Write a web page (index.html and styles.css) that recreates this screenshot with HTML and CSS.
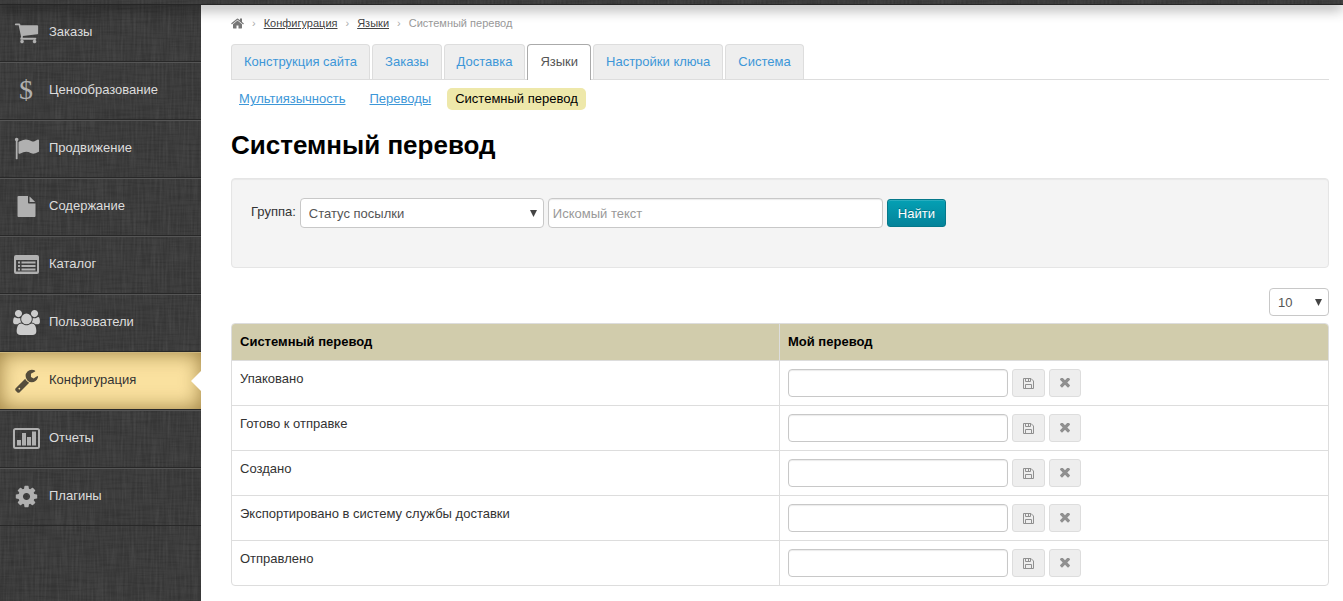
FILE: index.html
```html
<!DOCTYPE html>
<html lang="ru">
<head>
  <meta charset="UTF-8" />
  <meta name="viewport" content="width=device-width, initial-scale=1.0"/>
  <title>Системный перевод</title>
  <link rel="stylesheet" href="styles.css">
</head>
<body>
  <!-- общие иконки кнопок -->
  <svg class="sprite" aria-hidden="true">
    <symbol id="i-save" viewBox="0 0 11 11">
      <path d="M.5.5h7.500l2.500 2.500v7.500h-10zM2.500.5v3h5v-3M2.500 10.500v-4h6v4" fill="none" stroke="currentColor"/>
      <path d="M5 1h1v2h-1z" fill="currentColor"/>
    </symbol>
    <symbol id="i-times" viewBox="300 430 1192 1192">
      <path d="M1490 1322q0 40-28 68l-136 136q-28 28-68 28t-68-28l-294-294-294 294q-28 28-68 28t-68-28l-136-136q-28-28-28-68t28-68l294-294-294-294q-28-28-28-68t28-68l136-136q28-28 68-28t68 28l294 294 294-294q28-28 68-28t68 28l136 136q28 28 28 68t-28 68l-294 294 294 294q28 28 28 68z"/>
    </symbol>
  </svg>

  <header class="topbar"></header>

  <div class="layout">
    <nav class="sidebar">
      <a href="#" class="menu-item">
        <span class="menu-icon"><svg width="25" height="25" viewBox="0 0 1792 1792"><path d="M704 1536q0 52-38 90t-90 38-90-38-38-90 38-90 90-38 90 38 38 90zm896 0q0 52-38 90t-90 38-90-38-38-90 38-90 90-38 90 38 38 90zm128-1088v512q0 24-16.500 42.500t-40.500 21.500l-1044 122q13 60 13 70 0 16-24 64h920q26 0 45 19t19 45-19 45-45 19h-1024q-26 0-45-19t-19-45q0-11 8-31.500t16-36 21.500-40 15.500-29.500l-177-823h-204q-26 0-45-19t-19-45 19-45 45-19h256q16 0 28.500 6.500t19.500 15.500 13 24.500 8 26 5.500 29.500 4.500 26h1201q26 0 45 19t19 45z"/></svg></span>
        <span class="menu-text">Заказы</span>
      </a>
      <a href="#" class="menu-item">
        <span class="menu-icon menu-dollar">$</span>
        <span class="menu-text">Ценообразование</span>
      </a>
      <a href="#" class="menu-item">
        <span class="menu-icon"><svg width="25" height="25" viewBox="0 0 1792 1792"><path d="M320 256q0 72-64 110v1266q0 13-9.500 22.500t-22.500 9.500h-64q-13 0-22.500-9.500t-9.500-22.500v-1266q-64-38-64-110 0-53 37.500-90.500t90.500-37.500 90.500 37.500 37.500 90.500zm1472 64v763q0 25-12.500 38.500t-39.500 27.500q-215 116-369 116-61 0-123.500-22t-108.500-48-115.500-48-142.500-22q-192 0-464 146-17 9-33 9-26 0-45-19t-19-45v-742q0-32 31-55 21-14 79-43 236-120 421-120 107 0 200 29t219 88q38 19 88 19 54 0 117.500-21t110-47 88-47 54.500-21q26 0 45 19t19 45z"/></svg></span>
        <span class="menu-text">Продвижение</span>
      </a>
      <a href="#" class="menu-item">
        <span class="menu-icon"><svg width="21" height="21" viewBox="0 0 1792 1792"><path d="M1152 512v-472q22 14 36 28l408 408q14 14 28 36h-472zm-128 32q0 40 28 68t68 28h544v1056q0 40-28 68t-68 28h-1344q-40 0-68-28t-28-68v-1600q0-40 28-68t68-28h800v544z"/></svg></span>
        <span class="menu-text">Содержание</span>
      </a>
      <a href="#" class="menu-item">
        <span class="menu-icon"><svg width="25" height="19" viewBox="0 0 25 19"><path fill-rule="evenodd" d="M2 0h21a2 2 0 0 1 2 2v15a2 2 0 0 1-2 2h-21a2 2 0 0 1-2-2v-15a2 2 0 0 1 2-2zM2 5v11.500h21v-11.500z"/><path d="M4 6.500h2v2h-2zM4 10h2v2h-2zM4 13.500h2v2h-2zM7.500 6.500h14v2h-14zM7.500 10h14v2h-14zM7.500 13.500h14v2h-14z"/></svg></span>
        <span class="menu-text">Каталог</span>
      </a>
      <a href="#" class="menu-item menu-item-bright">
        <span class="menu-icon"><svg width="27" height="25" viewBox="0 0 1920 1792"><path d="M593 896q-162 5-265 128h-134q-82 0-138-40.500t-56-118.500q0-353 124-353 6 0 43.500 21t97.500 42.500 119 21.500q67 0 133-23-5 37-5 66 0 143 83 263zm1071 637q0 120-73 189.500t-194 69.500h-874q-121 0-194-69.500t-73-189.500q0-53 3.500-103.500t14-109 26.500-108.500 43-97.500 62-81 85.500-53.500 111.500-20q10 0 43 21.500t73 48 107 48 135 21.500 135-21.500 107-48 73-48 43-21.500q61 0 111.500 20t85.500 53.500 62 81 43 97.500 26.500 108.500 14 109 3.500 103.500zm-1024-1277q0 106-75 181t-181 75-181-75-75-181 75-181 181-75 181 75 75 181zm704 384q0 159-112.500 271.500t-271.500 112.500-271.500-112.500-112.500-271.500 112.500-271.500 271.500-112.500 271.500 112.500 112.500 271.500zm576 225q0 78-56 118.500t-138 40.500h-134q-103-123-265-128 83-120 83-263 0-29-5-66 66 23 133 23 59 0 119-21.500t97.500-42.500 43.500-21q124 0 124 353zm-128-609q0 106-75 181t-181 75-181-75-75-181 75-181 181-75 181 75 75 181z"/></svg></span>
        <span class="menu-text">Пользователи</span>
      </a>
      <a href="#" class="menu-item active">
        <span class="menu-icon"><svg width="25" height="25" viewBox="0 0 1792 1792"><path d="M448 1472q0-26-19-45t-45-19-45 19-19 45 19 45 45 19 45-19 19-45zm644-420l-682 682q-37 37-90 37-52 0-91-37l-106-108q-38-36-38-90 0-53 38-91l681-681q39 98 114.500 173.500t173.500 114.500zm634-435q0 39-23 106-47 134-164.500 217.500t-258.500 83.500q-185 0-316.500-131.500t-131.500-316.500 131.500-316.500 316.500-131.500q58 0 121.500 16.500t107.500 46.500q16 11 16 28t-16 28l-293 169v224l193 107q5-3 79-48.500t135.500-81 70.500-35.500q15 0 23.500 10t8.500 25z"/></svg></span>
        <span class="menu-text">Конфигурация</span>
      </a>
      <a href="#" class="menu-item">
        <span class="menu-icon"><svg width="27" height="21" viewBox="0 0 27 21"><rect x="1" y="1" width="25" height="19" rx="1.500" fill="none" stroke="currentColor" stroke-width="2"/><path d="M4 12h4v5.500h-4zM9 5h4v12.500h-4zM14 9h4v8.500h-4zM19 3.500h4v14h-4z"/></svg></span>
        <span class="menu-text">Отчеты</span>
      </a>
      <a href="#" class="menu-item">
        <span class="menu-icon"><svg width="25" height="25" viewBox="0 0 1792 1792"><path d="M1152 896q0-106-75-181t-181-75-181 75-75 181 75 181 181 75 181-75 75-181zm512-109v222q0 12-8 23t-20 13l-185 28q-19 54-39 91 35 50 107 138 10 12 10 25t-9 23q-27 37-99 108t-94 71q-12 0-26-9l-138-108q-44 23-91 38-16 136-29 186-7 28-36 28h-222q-14 0-24.500-8.500t-11.500-21.500l-28-184q-49-16-90-37l-141 107q-10 9-25 9-14 0-25-11-126-114-165-168-7-10-7-23 0-12 8-23 15-21 51-66.500t54-70.500q-27-50-41-99l-183-27q-13-2-21-12.500t-8-23.500v-222q0-12 8-23t19-13l186-28q14-46 39-92-40-57-107-138-10-12-10-24 0-10 9-23 26-36 98.500-107.500t94.500-71.500q13 0 26 10l138 107q44-23 91-38 16-136 29-186 7-28 36-28h222q14 0 24.500 8.500t11.500 21.500l28 184q49 16 90 37l142-107q9-9 24-9 13 0 25 10 129 119 165 170 7 8 7 22 0 12-8 23-15 21-51 66.500t-54 70.500q26 50 41 98l183 28q13 2 21 12.500t8 23.500z"/></svg></span>
        <span class="menu-text">Плагины</span>
      </a>
    </nav>

    <main class="content">
      <nav class="breadcrumbs">
        <a href="#" aria-label="Главная"><svg width="13" height="13" viewBox="64 64 1664 1664"><path d="M1472 992v480q0 26-19 45t-45 19h-384v-384h-256v384h-384q-26 0-45-19t-19-45v-480q0-1 .5-3t.5-3l575-474 575 474q1 2 1 6zm223-69l-62 74q-8 9-21 11h-3q-13 0-21-7l-692-577-692 577q-12 8-24 7-13-2-21-11l-62-74q-8-10-7-23.500t11-21.500l719-599q32-26 76-26t76 26l244 204v-195q0-14 9-23t23-9h192q14 0 23 9t9 23v408l219 182q10 8 11 21.500t-7 23.500z"/></svg></a>
        <span class="sep">›</span>
        <a href="#">Конфигурация</a>
        <span class="sep">›</span>
        <a href="#">Языки</a>
        <span class="sep">›</span>
        <span class="current">Системный перевод</span>
      </nav>

      <nav class="tabs">
        <a href="#" class="tab">Конструкция сайта</a>
        <a href="#" class="tab">Заказы</a>
        <a href="#" class="tab">Доставка</a>
        <a href="#" class="tab active">Языки</a>
        <a href="#" class="tab">Настройки ключа</a>
        <a href="#" class="tab">Система</a>
      </nav>

      <nav class="subnav">
        <a href="#">Мультиязычность</a>
        <a href="#">Переводы</a>
        <a href="#" class="active">Системный перевод</a>
      </nav>

      <h1>Системный перевод</h1>

      <form class="filter">
        <label for="group">Группа:</label>
        <select id="group" class="select group-select">
          <option>Статус посылки</option>
        </select>
        <input type="text" class="field search-field" placeholder="Искомый текст" aria-label="Искомый текст">
        <button type="button" class="btn-find">Найти</button>
      </form>

      <div class="pager">
        <select class="select page-size" aria-label="Строк на странице">
          <option>10</option>
        </select>
      </div>

      <table class="grid">
        <thead>
          <tr>
            <th>Системный перевод</th>
            <th>Мой перевод</th>
          </tr>
        </thead>
        <tbody>
          <tr>
            <td><label for="t1">Упаковано</label></td>
            <td>
              <div class="edit">
                <input type="text" id="t1" class="field">
                <button type="button" class="btn-icon" aria-label="Сохранить"><svg width="11" height="11"><use href="#i-save"/></svg></button>
                <button type="button" class="btn-icon" aria-label="Удалить"><svg width="10" height="10"><use href="#i-times"/></svg></button>
              </div>
            </td>
          </tr>
          <tr>
            <td><label for="t2">Готово к отправке</label></td>
            <td>
              <div class="edit">
                <input type="text" id="t2" class="field">
                <button type="button" class="btn-icon" aria-label="Сохранить"><svg width="11" height="11"><use href="#i-save"/></svg></button>
                <button type="button" class="btn-icon" aria-label="Удалить"><svg width="10" height="10"><use href="#i-times"/></svg></button>
              </div>
            </td>
          </tr>
          <tr>
            <td><label for="t3">Создано</label></td>
            <td>
              <div class="edit">
                <input type="text" id="t3" class="field">
                <button type="button" class="btn-icon" aria-label="Сохранить"><svg width="11" height="11"><use href="#i-save"/></svg></button>
                <button type="button" class="btn-icon" aria-label="Удалить"><svg width="10" height="10"><use href="#i-times"/></svg></button>
              </div>
            </td>
          </tr>
          <tr>
            <td><label for="t4">Экспортировано в систему службы доставки</label></td>
            <td>
              <div class="edit">
                <input type="text" id="t4" class="field">
                <button type="button" class="btn-icon" aria-label="Сохранить"><svg width="11" height="11"><use href="#i-save"/></svg></button>
                <button type="button" class="btn-icon" aria-label="Удалить"><svg width="10" height="10"><use href="#i-times"/></svg></button>
              </div>
            </td>
          </tr>
          <tr>
            <td><label for="t5">Отправлено</label></td>
            <td>
              <div class="edit">
                <input type="text" id="t5" class="field">
                <button type="button" class="btn-icon" aria-label="Сохранить"><svg width="11" height="11"><use href="#i-save"/></svg></button>
                <button type="button" class="btn-icon" aria-label="Удалить"><svg width="10" height="10"><use href="#i-times"/></svg></button>
              </div>
            </td>
          </tr>
        </tbody>
      </table>
    </main>
  </div>
</body>
</html>
```
FILE: styles.css
```css
* {
  margin: 0;
  padding: 0;
  box-sizing: border-box;
}

body {
  font-family: "Liberation Sans", Arial, sans-serif;
  font-size: 13px;
  line-height: 20px;
  color: #333;
  background: #fff;
  display: flex;
  flex-direction: column;
  min-height: 100vh;
}

svg {
  display: block;
  fill: currentColor;
}

.sprite {
  position: absolute;
  width: 0;
  height: 0;
}

input, select, button {
  font-family: inherit;
  font-size: 13px;
}

/* тканевая текстура: вертикальные и горизонтальные нити */
.topbar,
.sidebar {
  background-color: #3a3a3a;
  background-image:
    url("data:image/svg+xml,%3Csvg xmlns='http://www.w3.org/2000/svg' width='200' height='200'%3E%3Cfilter id='a' x='0' y='0' width='1' height='1'%3E%3CfeTurbulence type='fractalNoise' baseFrequency='.5 .03' numOctaves='2' stitchTiles='stitch'/%3E%3CfeColorMatrix values='0 0 0 0 1 0 0 0 0 1 0 0 0 0 1 .12 0 0 0 -.04'/%3E%3C/filter%3E%3Crect width='200' height='200' filter='url(%23a)'/%3E%3C/svg%3E"),
    url("data:image/svg+xml,%3Csvg xmlns='http://www.w3.org/2000/svg' width='200' height='200'%3E%3Cfilter id='a' x='0' y='0' width='1' height='1'%3E%3CfeTurbulence type='fractalNoise' baseFrequency='.03 .5' numOctaves='2' stitchTiles='stitch'/%3E%3CfeColorMatrix values='0 0 0 0 0 0 0 0 0 0 0 0 0 0 0 .3 0 0 0 -.12'/%3E%3C/filter%3E%3Crect width='200' height='200' filter='url(%23a)'/%3E%3C/svg%3E");
}

.topbar {
  position: relative;
  z-index: 2;
  height: 4px;
  box-shadow: 0 1px 0 #262626, 0 3px 14px rgba(0, 0, 0, 0.8);
}

.layout {
  flex: 1;
  display: flex;
}

/* боковое меню */
.sidebar {
  flex: 0 0 201px;
}

.menu-item {
  position: relative;
  display: flex;
  align-items: center;
  gap: 9px;
  height: 58px;
  padding: 0 0 2px 12px;
  border-top: 1px solid #555;
  border-bottom: 1px solid #282828;
  color: #ddd;
  text-decoration: none;
}

.menu-icon {
  width: 28px;
  display: flex;
  justify-content: center;
  color: #b0b0b0;
}

.menu-dollar {
  font-family: "Liberation Serif", serif;
  font-size: 28px;
}

.menu-item-bright .menu-icon {
  color: #ccc;
}

.menu-item.active {
  color: #333;
  background: #fae19f;
  border-top-color: #cdb67d;
  box-shadow: inset 0 0 20px rgba(90, 60, 0, 0.6);
}

.menu-item.active .menu-icon {
  color: #554d3c;
}

.menu-item.active::after {
  content: "";
  position: absolute;
  right: 0;
  top: 18px;
  border: solid transparent;
  border-width: 10px 10px 10px 0;
  border-right-color: #fff;
}

/* основная область */
.content {
  flex: 1;
  min-width: 0;
  padding: 9px 14px 14px 30px;
}

.breadcrumbs {
  display: flex;
  align-items: center;
  gap: 8px;
  font-size: 11px;
}

.breadcrumbs a {
  color: #444;
}

.breadcrumbs svg {
  color: #777;
}

.breadcrumbs .sep {
  color: #aaa;
}

.breadcrumbs .current {
  color: #999;
}

.tabs {
  display: flex;
  gap: 2px;
  margin-top: 11px;
  border-bottom: 1px solid #ddd;
}

.tab {
  padding: 7px 12px;
  border: 1px solid #ddd;
  border-bottom: 0;
  border-radius: 4px 4px 0 0;
  background: #eee;
  color: #3d97d8;
  text-decoration: none;
}

.tab.active {
  margin-bottom: -1px;
  border-color: #aaa;
  background: #fff;
  color: #555;
}

.subnav {
  display: flex;
  gap: 8px;
  margin-top: 8px;
}

.subnav a {
  padding: 1px 8px;
  border-radius: 5px;
  color: #3d97d8;
}

.subnav a.active {
  background: #eee8aa;
  color: #000;
  text-decoration: none;
}

h1 {
  margin-top: 20px;
  font-size: 26px;
  line-height: 30px;
  color: #000;
}

.filter {
  display: flex;
  align-items: flex-start;
  gap: 4px;
  margin-top: 18px;
  padding: 19px 19px 39px;
  border: 1px solid #e5e5e5;
  border-radius: 4px;
  background: #f4f4f4;
  box-shadow: inset 0 1px 1px rgba(0, 0, 0, 0.05);
}

.filter label {
  padding-top: 4px;
}

.select {
  appearance: none;
  height: 30px;
  padding: 0 20px 0 8px;
  border: 1px solid #c8c8c8;
  border-radius: 4px;
  background: #fff url("data:image/svg+xml,%3Csvg xmlns='http://www.w3.org/2000/svg' width='7' height='7'%3E%3Cpath d='M0 0h7l-3.500 7z' fill='%23444'/%3E%3C/svg%3E") no-repeat right 6px center;
  color: #555;
}

.group-select {
  width: 244px;
}

.field {
  width: 220px;
  height: 28px;
  padding: 0 4px;
  border: 1px solid #c8c8c8;
  border-radius: 4px;
  background: #fff;
  box-shadow: inset 0 1px 1px rgba(0, 0, 0, 0.08);
  color: #555;
}

.field::placeholder {
  color: #999;
}

.search-field {
  width: 335px;
  height: 30px;
}

.btn-find {
  height: 28px;
  margin-top: 1px;
  padding: 0 10px;
  border: 1px solid #05788a;
  border-radius: 3px;
  background: linear-gradient(#04a0b4, #04839a);
  color: #fff;
  text-shadow: 0 -1px 0 rgba(0, 0, 0, 0.25);
  box-shadow: inset 0 1px 0 rgba(255, 255, 255, 0.15);
  cursor: pointer;
}

.pager {
  display: flex;
  justify-content: flex-end;
  margin: 20px 0 7px;
}

.page-size {
  width: 60px;
  height: 28px;
}

/* таблица переводов */
.grid {
  width: 100%;
  table-layout: fixed;
  border: 1px solid #ddd;
  border-radius: 4px;
  border-spacing: 0;
  overflow: hidden;
}

.grid th {
  padding: 8px;
  background: #d1ccac;
  color: #000;
  text-align: left;
}

.grid td {
  padding: 8px;
  border-top: 1px solid #ddd;
  vertical-align: top;
}

.grid th:first-child,
.grid td:first-child {
  border-right: 1px solid #ddd;
}

.edit {
  display: flex;
  gap: 4px;
}

.btn-icon {
  height: 28px;
  padding: 0 10px;
  border: 1px solid #ddd;
  border-radius: 3px;
  background: #eee;
  color: #909090;
  cursor: pointer;
}
```
